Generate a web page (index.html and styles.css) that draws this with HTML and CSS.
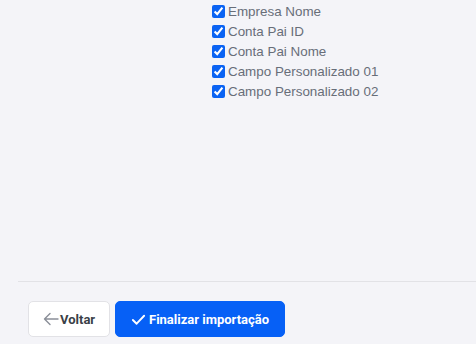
FILE: index.html
```html
<!DOCTYPE html>
<html lang="pt-BR">
<head>
    <meta charset="UTF-8">
    <meta name="viewport" content="width=device-width, initial-scale=1.0">
    <title>Importação</title>
    <link rel="stylesheet" href="styles.css">
</head>
<body>
    <div class="content">
        <ul class="field-list">
            <li><label><input type="checkbox" checked> Empresa Nome</label></li>
            <li><label><input type="checkbox" checked> Conta Pai ID</label></li>
            <li><label><input type="checkbox" checked> Conta Pai Nome</label></li>
            <li><label><input type="checkbox" checked> Campo Personalizado 01</label></li>
            <li><label><input type="checkbox" checked> Campo Personalizado 02</label></li>
        </ul>
    </div>
    <div class="footer">
        <button class="btn btn-back">
            <svg width="16" height="16" viewBox="0 0 16 16" fill="none" stroke="#8a8f98" stroke-width="1.4" stroke-linecap="round" stroke-linejoin="round"><path d="M15 8H1.5M7 2.5L1.5 8 7 13.5"/></svg>
            Voltar
        </button>
        <button class="btn btn-primary">
            <svg width="15" height="15" viewBox="0 0 16 16" fill="none" stroke="#fff" stroke-width="2" stroke-linecap="round" stroke-linejoin="round"><path d="M2 8.5l4 4L14 4"/></svg>
            Finalizar importação
        </button>
    </div>
</body>
</html>
```

FILE: styles.css
```css
body {
    margin: 0;
    padding: 0;
    background-color: #f4f4f8;
    font-family: "Liberation Sans", Arial, sans-serif;
}
.content {
    height: 281px;
    padding-left: 211px;
    box-sizing: border-box;
}
.field-list {
    list-style: none;
    margin: 0;
    padding: 1px 0 0 0;
}
.field-list li {
    height: 20px;
    display: flex;
    align-items: center;
}
.field-list label {
    display: flex;
    align-items: center;
    font-size: 13.4px;
    color: #686e78;
}
.field-list input {
    width: 13px;
    height: 13px;
    margin: 0 3px 0 1px;
    accent-color: #0b63f3;
}
.footer {
    margin-left: 18px;
    border-top: 1px solid #e2e2e6;
    padding: 19px 10px;
    display: flex;
    gap: 5px;
}
.btn {
    display: flex;
    align-items: center;
    gap: 1px;
    height: 36px;
    border-radius: 5px;
    font-family: Roboto, "Liberation Sans", sans-serif;
    font-size: 13px;
    font-weight: 700;
    cursor: pointer;
}
.btn-back {
    width: 82px;
    padding: 0 0 0 14px;
    background-color: #fff;
    border: 1px solid #e2e2e6;
    color: #3a3f47;
}
.btn-primary {
    width: 170px;
    padding: 0 0 0 15px;
    background-color: #0660f6;
    border: 1px solid #0660f6;
    color: #fff;
    gap: 3px;
}
```
